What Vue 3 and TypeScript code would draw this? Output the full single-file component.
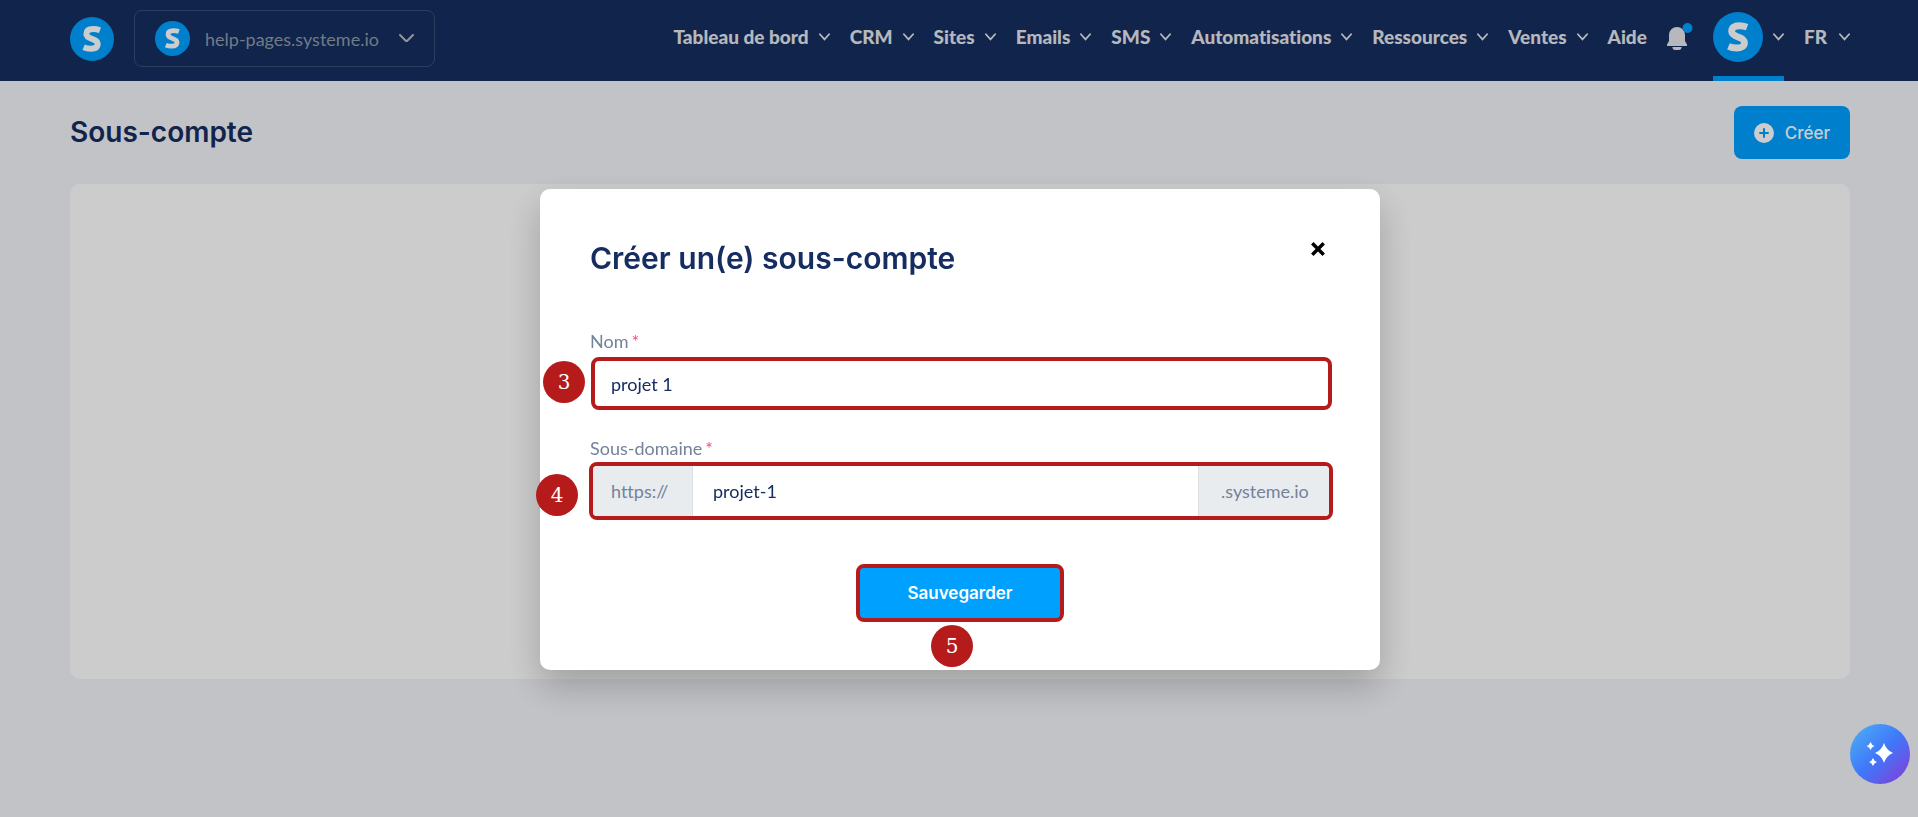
<script setup lang="ts">
import { ref } from 'vue'

const menu = ['Tableau de bord', 'CRM', 'Sites', 'Emails', 'SMS', 'Automatisations', 'Ressources', 'Ventes']
const logoPath =
  'M30 13.300C27.500 12.400 25 12.100 23 12.100C18.500 12.100 16.400 14 16.400 17C16.400 19.800 18.500 20.800 22 21.900C25.800 23.100 27.700 24.300 27.700 27C27.700 30.200 25 31.700 20.800 31.700C18.300 31.700 16 31.300 13.600 30.300'
const name = ref<string>('projet 1')
const subdomain = ref<string>('projet-1')
</script>

<template>
  <div class="page">
    <header class="topbar">
      <svg class="logo" viewBox="0 0 44 44" aria-hidden="true">
        <circle cx="22" cy="22" r="22" />
        <path :d="logoPath" />
      </svg>
      <button class="account" type="button">
        <svg class="logo account-logo" viewBox="0 0 44 44" aria-hidden="true">
          <circle cx="22" cy="22" r="22" />
          <path :d="logoPath" />
        </svg>
        <span>help-pages.systeme.io</span>
        <svg class="account-chevron" viewBox="0 0 15 9" aria-hidden="true"><path d="M1 1l5.500 5.500q1 1 2 0L14 1" /></svg>
      </button>
      <nav class="menu">
        <button v-for="item in menu" :key="item" class="menu-item" type="button">
          {{ item }}
          <svg class="chevron" viewBox="0 0 12 8" aria-hidden="true"><path d="M1 1l5 5.500L11 1" /></svg>
        </button>
        <a class="menu-item" href="#">Aide</a>
        <button class="bell" type="button" aria-label="Notifications">
          <svg viewBox="0 0 26 28" aria-hidden="true">
            <path d="M10 4a8 8 0 0 1 8 8v6l2 3.500q.5 1.500-1 1.500H1q-1.500 0-1-1.500L2 18v-6a8 8 0 0 1 8-8zM5.500 24h9v1q-.5 2-2.500 2H8q-2 0-2.500-2z" fill="#e4e6ea" />
            <circle cx="20.500" cy="5" r="5" fill="#00a0ff" />
          </svg>
        </button>
        <button class="menu-item profile" type="button" aria-label="Profil">
          <svg class="logo avatar" viewBox="0 0 44 44" aria-hidden="true">
            <circle cx="22" cy="22" r="22" />
            <path :d="logoPath" />
          </svg>
          <svg class="chevron" viewBox="0 0 12 8" aria-hidden="true"><path d="M1 1l5 5.500L11 1" /></svg>
        </button>
        <button class="menu-item language" type="button">
          FR
          <svg class="chevron" viewBox="0 0 12 8" aria-hidden="true"><path d="M1 1l5 5.500L11 1" /></svg>
        </button>
      </nav>
    </header>

    <main class="content">
      <div class="heading">
        <h1>Sous-compte</h1>
        <button class="create" type="button">
          <svg viewBox="0 0 20 20" aria-hidden="true">
            <circle cx="10" cy="10" r="10" fill="#fff" />
            <path d="M10 6v8M6 10h8" stroke="#00a0ff" stroke-width="2" stroke-linecap="round" />
          </svg>
          Créer
        </button>
      </div>
      <section class="card"></section>
    </main>

    <div class="overlay">
      <form class="dialog" role="dialog" aria-labelledby="dialog-title" @submit.prevent>
        <div class="dialog-head">
          <h2 id="dialog-title">Créer un(e) sous-compte</h2>
          <button class="close" type="button" aria-label="Fermer">
            <svg viewBox="0 0 14 14" aria-hidden="true"><path d="M2 2l10 10M12 2L2 12" /></svg>
          </button>
        </div>
        <div class="field">
          <label for="name">Nom<span class="required">*</span></label>
          <div class="frame name-frame">
            <input id="name" v-model="name" type="text" />
          </div>
          <span class="badge badge-name">3</span>
        </div>
        <div class="field">
          <label for="subdomain">Sous-domaine<span class="required">*</span></label>
          <div class="frame domain-frame">
            <span class="prefix">https://</span>
            <input id="subdomain" v-model="subdomain" type="text" />
            <span class="suffix">.systeme.io</span>
          </div>
          <span class="badge badge-domain">4</span>
        </div>
        <div class="actions">
          <button class="save" type="submit">Sauvegarder</button>
          <span class="badge badge-save">5</span>
        </div>
      </form>
    </div>

    <button class="assistant" type="button" aria-label="Assistant">
      <svg viewBox="0 0 60 60" aria-hidden="true">
        <path d="M34 19Q36.500 26.500 43 29Q36.500 31.500 34 39Q31.500 31.500 25 29Q31.500 26.500 34 19z" />
        <path d="M20.500 18Q21.500 21 24.500 22Q21.500 23 20.500 26Q19.500 23 16.500 22Q19.500 21 20.500 18z" />
        <path d="M23 34Q24 37 27 38Q24 39 23 42Q22 39 19 38Q22 37 23 34z" />
      </svg>
    </button>
  </div>
</template>

<style>
body {
  background: #f3f4f9;
}
</style>

<style scoped>
.page {
  min-height: 100vh;
  font-family: Lato, sans-serif;
  font-size: 18px;
  font-variant-ligatures: none;
  color: #152d60;
}
button,
input {
  font: inherit;
  font-variant-ligatures: none;
  color: inherit;
  margin: 0;
  padding: 0;
  border: 0;
  background: none;
}
svg {
  display: block;
  flex: none;
}
.topbar {
  display: flex;
  align-items: center;
  height: 81px;
  box-sizing: border-box;
  padding: 0 68px 4px 70px;
  background: #152d60;
}
.logo {
  width: 44px;
  height: 44px;
}
.logo circle {
  fill: #00a0ff;
}
.logo path {
  fill: none;
  stroke: #fff;
  stroke-width: 6;
}
.account {
  display: flex;
  align-items: center;
  box-sizing: border-box;
  height: 57px;
  margin-left: 20px;
  padding: 0 20px;
  border: 1px solid #3a4d75;
  border-radius: 8px;
  color: #8d9ba8;
}
.account-logo {
  width: 35px;
  height: 35px;
  margin-right: 15px;
}
.account-chevron {
  width: 15px;
  height: 9px;
  margin-left: 20px;
}
.account-chevron path,
.chevron path {
  fill: none;
  stroke: #b4bcc6;
  stroke-width: 2;
  stroke-linecap: round;
}
.menu {
  display: flex;
  align-items: center;
  align-self: flex-start;
  gap: 20px;
  margin-left: auto;
  box-sizing: border-box;
  height: 81px;
  padding-bottom: 8px;
}
.menu-item {
  display: flex;
  align-items: center;
  gap: 10px;
  font-size: 19px;
  font-weight: 900;
  color: #e4e6ea;
  text-decoration: none;
  white-space: nowrap;
}
.language {
  gap: 12px;
}
.chevron {
  width: 11px;
  height: 8px;
}
.chevron path {
  stroke-width: 2;
  stroke: #e4e6ea;
}
.bell svg {
  width: 26px;
  height: 28px;
}
.profile {
  position: relative;
  height: 100%;
}
.profile::after {
  content: '';
  position: absolute;
  left: 0;
  right: 0;
  bottom: -8px;
  height: 5px;
  background: #00a0ff;
}
.avatar {
  width: 50px;
  height: 50px;
}
.content {
  padding: 25px 68px 0 70px;
}
.heading {
  display: flex;
  align-items: center;
  justify-content: space-between;
}
h1,
h2 {
  margin: 0;
  font-family: Inter, sans-serif;
  font-weight: 600;
}
h1 {
  padding-bottom: 2px;
  font-size: 28px;
  line-height: 36px;
}
.create {
  display: flex;
  align-items: center;
  gap: 11px;
  height: 53px;
  padding: 0 20px;
  border-radius: 8px;
  background: #00a0ff;
  color: #fff;
  font-family: Inter, sans-serif;
  font-size: 17px;
  font-weight: 500;
}
.create svg {
  width: 20px;
  height: 20px;
}
.card {
  height: 495px;
  margin-top: 25px;
  border-radius: 10px;
  background: #fff;
}
.overlay {
  position: fixed;
  inset: 0;
  display: flex;
  align-items: flex-start;
  justify-content: center;
  padding: 189px 0 0 2px;
  background: rgba(0, 0, 0, 0.2);
}
.dialog {
  box-sizing: border-box;
  width: 840px;
  padding: 48px 47px 48px 50px;
  border-radius: 10px;
  background: #fff;
  box-shadow: 0 16px 36px rgba(0, 0, 0, 0.22);
}
.dialog-head {
  display: flex;
  align-items: flex-start;
  justify-content: space-between;
  height: 92px;
}
h2 {
  font-size: 30px;
  line-height: 43px;
}
.close {
  padding: 4px 7px;
}
.close svg {
  width: 16px;
  height: 16px;
}
.close path {
  stroke: #000;
  stroke-width: 3;
}
.field {
  position: relative;
}
label {
  display: block;
  line-height: 24px;
  color: #74829b;
}
.required {
  margin-left: 3px;
  color: #ff4774;
}
.frame {
  display: flex;
  box-sizing: border-box;
  border: 4px solid #b61b1b;
  border-radius: 8px;
  overflow: hidden;
}
.name-frame {
  height: 53px;
  margin: 4px 1px 26px;
}
.domain-frame {
  height: 58px;
  margin: 2px 0 44px -1px;
}
input {
  flex: 1;
  min-width: 0;
  padding: 0 16px;
  outline: none;
}
.domain-frame input {
  padding: 0 20px;
}
.prefix,
.suffix {
  display: flex;
  align-items: center;
  box-sizing: border-box;
  background: #e9ecef;
  color: #74829b;
}
.prefix {
  width: 100px;
  padding-left: 18px;
  border-right: 1px solid #dcdfe4;
}
.suffix {
  width: 131px;
  padding-left: 22px;
  border-left: 1px solid #dcdfe4;
}
.badge {
  position: absolute;
  display: flex;
  align-items: center;
  justify-content: center;
  width: 42px;
  height: 42px;
  border-radius: 50%;
  background: #b61b1b;
  color: #fff;
  font: 400 20px "DejaVu Serif", serif;
}
.badge-name {
  left: -47px;
  top: 32px;
}
.badge-domain {
  left: -54px;
  top: 38px;
}
.actions {
  position: relative;
  display: flex;
  justify-content: center;
  margin-right: 3px;
}
.save {
  width: 208px;
  height: 58px;
  border: 4px solid #b61b1b;
  border-radius: 8px;
  background: #00a0ff;
  color: #fff;
  font-family: Inter, sans-serif;
  font-size: 17px;
  font-weight: 600;
}
.badge-save {
  left: 341px;
  top: 61px;
}
.assistant {
  position: fixed;
  right: 8px;
  bottom: 33px;
  width: 60px;
  height: 60px;
  border-radius: 50%;
  background: linear-gradient(135deg, #4ba7f5 10%, #3f78fa 50%, #7a45dc 90%);
}
.assistant svg {
  width: 60px;
  height: 60px;
  fill: #fff;
}
</style>
